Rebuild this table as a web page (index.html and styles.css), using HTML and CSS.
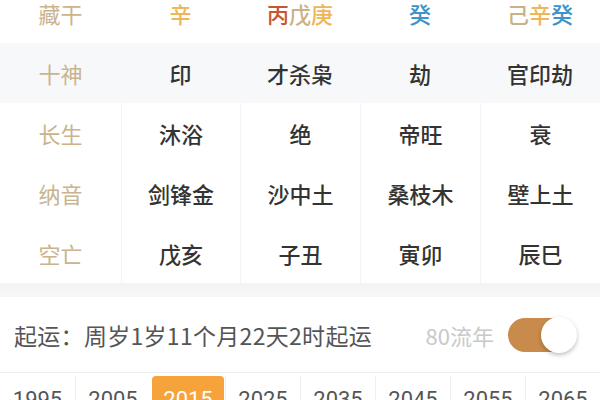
FILE: index.html
```html
<!DOCTYPE html>
<html lang="zh">
<head>
<meta charset="utf-8">
<link rel="stylesheet" href="styles.css">
</head>
<body>
<div class="page">
  <div class="table">
    <div class="row row-cang">
      <div class="label">藏干</div>
      <div class="cell"><span class="c-yellow">辛</span></div>
      <div class="cell"><span class="c-red">丙</span><span class="c-tan">戊</span><span class="c-yellow">庚</span></div>
      <div class="cell"><span class="c-blue">癸</span></div>
      <div class="cell"><span class="c-tan">己</span><span class="c-yellow">辛</span><span class="c-blue">癸</span></div>
    </div>
    <div class="row row-shade">
      <div class="label">十神</div>
      <div class="cell val">印</div>
      <div class="cell val">才杀枭</div>
      <div class="cell val">劫</div>
      <div class="cell val">官印劫</div>
    </div>
    <div class="block">
      <div class="row">
        <div class="label">长生</div>
        <div class="cell val sep">沐浴</div>
        <div class="cell val sep">绝</div>
        <div class="cell val sep">帝旺</div>
        <div class="cell val sep">衰</div>
      </div>
      <div class="row">
        <div class="label">纳音</div>
        <div class="cell val sep">剑锋金</div>
        <div class="cell val sep">沙中土</div>
        <div class="cell val sep">桑枝木</div>
        <div class="cell val sep">壁上土</div>
      </div>
      <div class="row">
        <div class="label">空亡</div>
        <div class="cell val sep">戊亥</div>
        <div class="cell val sep">子丑</div>
        <div class="cell val sep">寅卯</div>
        <div class="cell val sep">辰巳</div>
      </div>
    </div>
  </div>
  <div class="band"></div>
  <div class="qiyun">
    <div class="qiyun-text">起运：周岁1岁11个月22天2时起运</div>
    <div class="liunian">80流年</div>
    <div class="toggle"><div class="knob"></div></div>
  </div>
  <div class="years">
    <div class="year">1995</div>
    <div class="year">2005</div>
    <div class="year active">2015</div>
    <div class="year">2025</div>
    <div class="year">2035</div>
    <div class="year">2045</div>
    <div class="year">2055</div>
    <div class="year">2065</div>
  </div>
</div>
</body>
</html>
```

FILE: styles.css
```css
* { box-sizing: border-box; }
html, body {
  margin: 0;
  padding: 0;
  background: #ffffff;
  overflow: hidden;
}
body {
  font-family: "Noto Sans CJK SC", "Noto Sans", sans-serif;
  width: 600px;
  height: 400px;
}
.page {
  width: 600px;
  height: 400px;
  overflow: hidden;
}
.table {
  margin-top: -17px;
}
.row {
  display: grid;
  grid-template-columns: 121px 119px 120px 120px 120px;
  height: 60px;
  align-items: center;
}
.row-shade {
  background: #f7f8fa;
}
.label {
  text-align: center;
  font-size: 22px;
  color: #c9b48e;
  font-weight: 400;
}
.cell {
  height: 100%;
  display: flex;
  align-items: center;
  justify-content: center;
  font-size: 22px;
  font-weight: 500;
}
.val {
  color: #333333;
}
.sep {
  border-left: 1px solid #f4f4f6;
}
.c-yellow { color: #f0b556; }
.c-red { color: #c95530; }
.c-tan { color: #cbb088; }
.c-blue { color: #3f93c9; }
.band {
  height: 14px;
  background: linear-gradient(#f3f3f4, #f7f7f8);
}
.qiyun {
  height: 75px;
  display: flex;
  align-items: center;
  padding: 0 24px 0 14px;
}
.qiyun-text {
  font-size: 23px;
  color: #555555;
  flex: 1;
  letter-spacing: 0.3px;
}
.liunian {
  font-size: 22px;
  color: #c9c9c9;
  margin-right: 14px;
}
.toggle {
  width: 68px;
  height: 34px;
  border-radius: 17px;
  background: #c98b4c;
  position: relative;
}
.knob {
  position: absolute;
  right: -1px;
  top: -1px;
  width: 36px;
  height: 36px;
  border-radius: 50%;
  background: #ffffff;
  box-shadow: 0 2px 4px rgba(0,0,0,0.25);
}
.years {
  border-top: 1px solid #efefef;
  display: grid;
  grid-template-columns: repeat(8, 75px);
  padding-top: 3px;
}
.year {
  height: 46px;
  line-height: 48px;
  text-align: center;
  font-family: Roboto, "Noto Sans", sans-serif;
  font-size: 22px;
  color: #555555;
  border-left: 1px solid #efefef;
}
.year:first-child {
  border-left: none;
}
.year.active {
  background: #f6a33c;
  color: #ffffff;
  border-radius: 4px 4px 0 0;
  border-left: none;
  margin: 0 1px 0 2px;
}
```
